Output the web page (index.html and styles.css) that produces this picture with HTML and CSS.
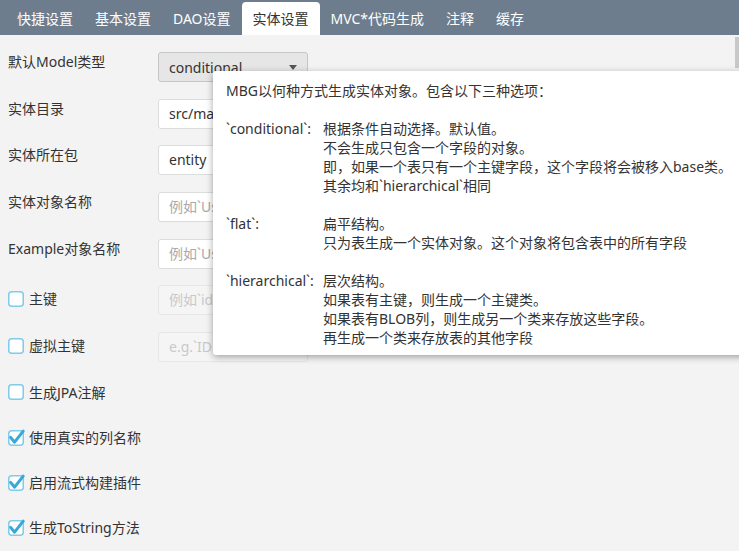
FILE: index.html
```html
<!DOCTYPE html>
<html lang="zh-CN">
<head>
<meta charset="utf-8">
<title>实体设置</title>
<link rel="stylesheet" href="styles.css">
</head>
<body>
<div class="app">
  <nav class="tabs">
    <div class="tab">快捷设置</div>
    <div class="tab">基本设置</div>
    <div class="tab">DAO设置</div>
    <div class="tab active">实体设置</div>
    <div class="tab">MVC*代码生成</div>
    <div class="tab">注释</div>
    <div class="tab">缓存</div>
  </nav>
  <main class="content">
    <div class="form">
      <div class="row">
        <div class="label">默认Model类型</div>
        <div class="select"><span>conditional</span><i class="caret"></i></div>
      </div>
      <div class="row">
        <div class="label">实体目录</div>
        <div class="input">src/main/java</div>
      </div>
      <div class="row">
        <div class="label">实体所在包</div>
        <div class="input">entity</div>
      </div>
      <div class="row">
        <div class="label">实体对象名称</div>
        <div class="input placeholder">例如`User`</div>
      </div>
      <div class="row">
        <div class="label">Example对象名称</div>
        <div class="input placeholder">例如`UserExample`</div>
      </div>
      <div class="row">
        <label class="check"><svg class="box" width="16" height="16" viewBox="0 0 16 16"><rect x="0.75" y="0.75" width="14.5" height="14.5" rx="3" fill="#fff" stroke="#7fcbea" stroke-width="1.5"/></svg>主键</label>
        <div class="input disabled placeholder">例如`id`</div>
      </div>
      <div class="row">
        <label class="check"><svg class="box" width="16" height="16" viewBox="0 0 16 16"><rect x="0.75" y="0.75" width="14.5" height="14.5" rx="3" fill="#fff" stroke="#7fcbea" stroke-width="1.5"/></svg>虚拟主键</label>
        <div class="input disabled placeholder">e.g.`ID1,ID2`</div>
      </div>
      <div class="row short">
        <label class="check"><svg class="box" width="16" height="16" viewBox="0 0 16 16"><rect x="0.75" y="0.75" width="14.5" height="14.5" rx="3" fill="#fff" stroke="#7fcbea" stroke-width="1.5"/></svg>生成JPA注解</label>
      </div>
      <div class="row short">
        <label class="check"><svg class="box" width="16" height="16" viewBox="0 0 16 16"><rect x="0.75" y="0.75" width="14.5" height="14.5" rx="3" fill="#fff" stroke="#7fcbea" stroke-width="1.5"/><path d="M2.6 7.4 L6.6 12.2 L15.2 1.2" fill="none" stroke="#3aa7d9" stroke-width="3" stroke-linecap="round" stroke-linejoin="round"/></svg>使用真实的列名称</label>
      </div>
      <div class="row short">
        <label class="check"><svg class="box" width="16" height="16" viewBox="0 0 16 16"><rect x="0.75" y="0.75" width="14.5" height="14.5" rx="3" fill="#fff" stroke="#7fcbea" stroke-width="1.5"/><path d="M2.6 7.4 L6.6 12.2 L15.2 1.2" fill="none" stroke="#3aa7d9" stroke-width="3" stroke-linecap="round" stroke-linejoin="round"/></svg>启用流式构建插件</label>
      </div>
      <div class="row short">
        <label class="check"><svg class="box" width="16" height="16" viewBox="0 0 16 16"><rect x="0.75" y="0.75" width="14.5" height="14.5" rx="3" fill="#fff" stroke="#7fcbea" stroke-width="1.5"/><path d="M2.6 7.4 L6.6 12.2 L15.2 1.2" fill="none" stroke="#3aa7d9" stroke-width="3" stroke-linecap="round" stroke-linejoin="round"/></svg>生成ToString方法</label>
      </div>
    </div>
    <div class="scrollthumb"></div>
  </main>
  <div class="tooltip">
    <div class="tip-intro">MBG以何种方式生成实体对象。包含以下三种选项：</div>
    <div class="tip-item">
      <div class="term">`conditional`:</div>
      <div class="desc">根据条件自动选择。默认值。<br>不会生成只包含一个字段的对象。<br>即，如果一个表只有一个主键字段，这个字段将会被移入base类。<br>其余均和`hierarchical`相同</div>
    </div>
    <div class="tip-item">
      <div class="term">`flat`:</div>
      <div class="desc">扁平结构。<br>只为表生成一个实体对象。这个对象将包含表中的所有字段</div>
    </div>
    <div class="tip-item last">
      <div class="term">`hierarchical`:</div>
      <div class="desc">层次结构。<br>如果表有主键，则生成一个主键类。<br>如果表有BLOB列，则生成另一个类来存放这些字段。<br>再生成一个类来存放表的其他字段</div>
    </div>
  </div>
</div>
</body>
</html>
```

FILE: styles.css
```css
html, body {
  margin: 0;
  padding: 0;
  width: 739px;
  height: 551px;
  overflow: hidden;
  background: #f3f3f3;
}

body {
  font-family: "Noto Sans", "Noto Sans CJK SC", sans-serif;
  font-size: 14px;
  color: #333;
}

.app {
  position: relative;
  width: 739px;
  height: 551px;
}

.tabs {
  display: flex;
  align-items: flex-end;
  height: 35px;
  padding-left: 6px;
  background: #6e7d8e;
  box-sizing: border-box;
}

.tab {
  padding: 0 11px;
  height: 33px;
  line-height: 33px;
  color: #fff;
  white-space: nowrap;
}

.tab.active {
  background: #fff;
  color: #333;
  border-radius: 4px 4px 0 0;
}

.content {
  position: relative;
  height: 516px;
  padding: 17px 8px 0;
  box-sizing: border-box;
}

.form {
  display: flex;
  flex-direction: column;
  gap: 16.7px;
}

.row {
  display: grid;
  grid-template-columns: 150px 150px;
  align-items: start;
  height: 30px;
}

.row.short {
  height: 28.5px;
}

.label {
  line-height: 19px;
  white-space: nowrap;
}

.check {
  display: flex;
  align-items: center;
  gap: 5px;
  padding-top: 4px;
  line-height: 19px;
  white-space: nowrap;
}

.box {
  flex: none;
  overflow: visible;
}

.select {
  display: flex;
  align-items: center;
  justify-content: space-between;
  height: 30px;
  padding: 0 10px 0 10px;
  box-sizing: border-box;
  background: #e6e6e6;
  border: 1px solid #c6c6c6;
  border-radius: 3px;
  color: #333;
}

.caret {
  width: 0;
  height: 0;
  border-left: 4px solid transparent;
  border-right: 4px solid transparent;
  border-top: 5px solid #555;
}

.input {
  height: 30px;
  line-height: 28px;
  padding: 0 10px;
  box-sizing: border-box;
  background: #fff;
  border: 1px solid #dcdcdc;
  border-radius: 3px;
  white-space: nowrap;
  overflow: hidden;
}

.input.placeholder {
  color: #a9a9a9;
}

.input.disabled {
  background: #f5f5f5;
  border-color: #e6e6e6;
  color: #c9c9c9;
}

.scrollthumb {
  position: absolute;
  right: 0;
  top: 2px;
  width: 4px;
  height: 31px;
  background: #c8c8c8;
}

.tooltip {
  position: absolute;
  left: 213px;
  top: 71px;
  width: 560px;
  padding: 10px 13px 8px;
  box-sizing: border-box;
  background: #fff;
  border-radius: 3px;
  box-shadow: 0 2px 7px rgba(0, 0, 0, 0.35);
  line-height: 19px;
  color: #333;
  white-space: nowrap;
}

.tip-intro {
  margin-bottom: 19px;
}

.tip-item {
  display: grid;
  grid-template-columns: 97px 1fr;
  margin-bottom: 19px;
}

.tip-item.last {
  margin-bottom: 0;
}
```
